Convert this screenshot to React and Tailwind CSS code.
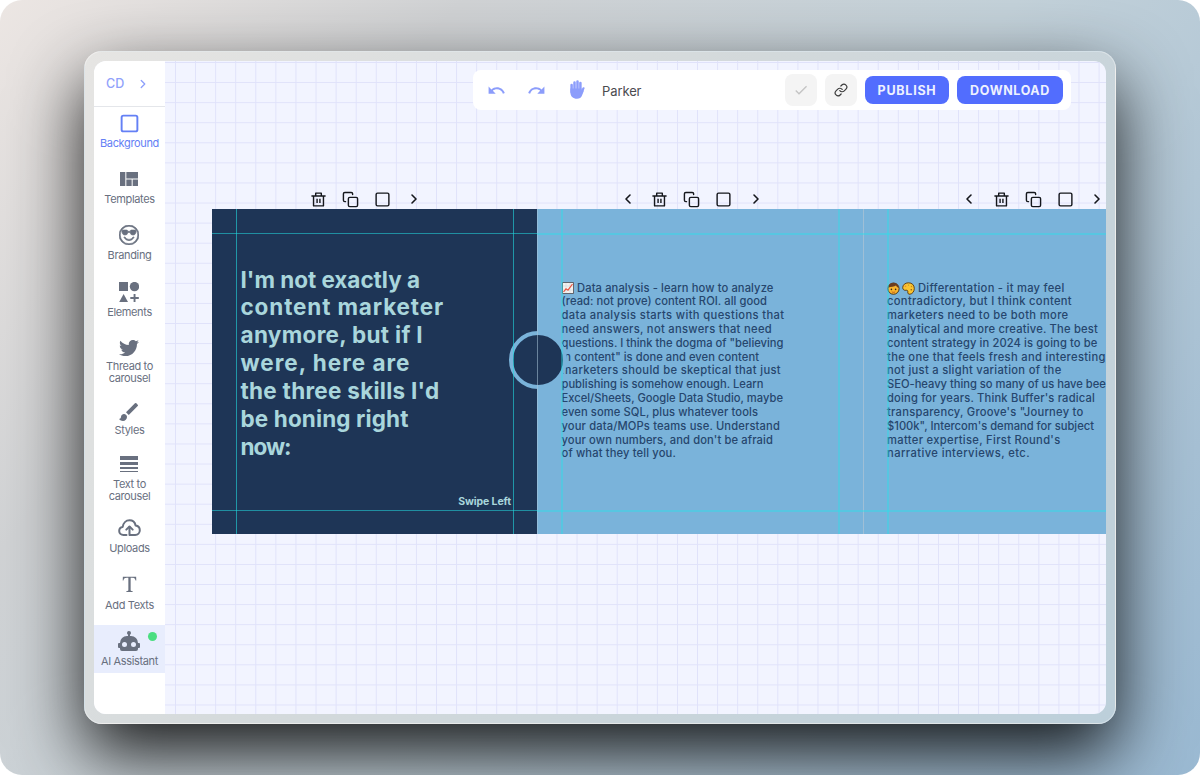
import { useLayoutEffect, useRef } from "react"
import { BsEmojiSunglasses, BsFonts } from "react-icons/bs"
import { FaTwitter } from "react-icons/fa"
import { FiChevronLeft, FiChevronRight, FiCopy, FiLink, FiSquare } from "react-icons/fi"
import { MdBrush, MdCheck, MdLineWeight, MdRedo, MdUndo, MdViewQuilt } from "react-icons/md"
import { RiDeleteBinLine } from "react-icons/ri"

const ShapesIcon = () => (
  <svg width="20" height="20" viewBox="0 0 20 20" fill="currentColor">
    <rect x="0" y="0" width="9" height="9" />
    <circle cx="15.5" cy="4.6" r="4.7" />
    <path d="M4.6 12 9 20H.2z" />
    <path d="M14.6 12h1.9v3.1h3.3v1.9h-3.3v3.1h-1.9V17h-3.3v-1.9h3.3z" />
  </svg>
)

const CloudUploadIcon = () => (
  <svg width="23" height="18" viewBox="0 0 23 18" fill="none" stroke="currentColor" strokeWidth="2" strokeLinecap="round" strokeLinejoin="round">
    <path d="M8.5 16H5.5C3 16 1.2 14.3 1.2 12c0-2 1.4-3.7 3.5-4C5.2 4 8 1.3 11.5 1.3c3 0 5.4 1.9 6.1 5.2C20 6.8 21.8 8.6 21.8 11.2c0 2.7-1.9 4.8-4.6 4.8h-5.7V8" />
    <path d="M8.3 10.6 11.5 7.5l3.2 3.1" />
  </svg>
)

const RobotIcon = () => (
  <svg width="24" height="24" viewBox="0 0 24 24" fill="currentColor">
    <path d="M12 2a2 2 0 0 1 2 2c0 .74-.4 1.39-1 1.73V7h1a7 7 0 0 1 7 7h1a1 1 0 0 1 1 1v3a1 1 0 0 1-1 1h-1v1a2 2 0 0 1-2 2H5a2 2 0 0 1-2-2v-1H2a1 1 0 0 1-1-1v-3a1 1 0 0 1 1-1h1a7 7 0 0 1 7-7h1V5.73A2 2 0 0 1 12 2M7.5 13a2.5 2.5 0 1 0 0 5 2.5 2.5 0 0 0 0-5m9 0a2.5 2.5 0 1 0 0 5 2.5 2.5 0 0 0 0-5z" />
  </svg>
)

const HandIcon = () => (
  <svg width="15" height="19" viewBox="0 0 15 19" className="mb-px ml-[24px]" fill="none" stroke="currentColor" strokeLinecap="round">
    <path d="M1.6 5v7M4.5 2.6v9M7.5 1.5v9M10.4 3v9" strokeWidth="2.5" />
    <path d="M13.5 8.3 11.2 13" strokeWidth="2.2" />
    <path d="M.4 8.5h11.2v3l1.4-2 .8 1.5-1.8 4.5c-.8 2.2-2.5 3.3-5 3.3-4 0-6.600-2.500-6.600-6.300z" fill="currentColor" stroke="none" />
  </svg>
)

const ChartEmoji = () => (
  <svg width="12" height="12" viewBox="0 0 12 12" className="mr-[3.5px]">
    <rect x=".4" y=".4" width="11.2" height="11.2" rx=".5" fill="#f4f1ee" stroke="#3f3b3f" strokeWidth=".8" />
    <path d="M4 1v10M8 1v10M1 4h10M1 8h10" stroke="#cbd6dc" strokeWidth=".5" />
    <path d="M1.5 10 4 6.8l2 1.4L10.5 2" fill="none" stroke="#e8533f" strokeWidth="1.2" />
  </svg>
)

const FaceEmoji = () => (
  <svg width="13" height="13" viewBox="0 0 13 13" className="mr-[1.5px]">
    <circle cx="6.5" cy="6.7" r="5.6" fill="#f9b52e" stroke="#3b2a1c" strokeWidth=".9" />
    <path d="M1.2 5.8C1.500 2.500 3.500.8 6.500.8s5 1.700 5.300 5C10.500 5.500 9.500 4.700 9 3.600 7.500 4.900 3.500 4.600 1.200 5.800z" fill="#6b3d1f" />
    <circle cx="4.4" cy="7.4" r=".8" fill="#3b2a1c" />
    <circle cx="8.6" cy="7.4" r=".8" fill="#3b2a1c" />
    <path d="M4.8 9.8c1 .7 2.4.7 3.4 0" fill="none" stroke="#b0451c" strokeWidth=".8" />
  </svg>
)

const PaletteEmoji = () => (
  <svg width="13" height="13" viewBox="0 0 13 13" className="mr-[3.5px]">
    <path d="M6.5.8C3 .8.7 3 .7 5.6c0 2 1.5 3 3.2 2.7 1.5-.3 2.1.5 1.9 1.7-.2 1.5.7 2.4 2.2 2.2 2.6-.3 4.3-3 4.3-5.7C12.3 3 10 .8 6.5.8z" fill="#fac42f" stroke="#57340f" strokeWidth=".9" />
    <circle cx="3.5" cy="4.2" r=".8" fill="#e8833f" />
    <circle cx="6.5" cy="3" r=".6" fill="#a98b2b" />
    <circle cx="9.5" cy="4.5" r=".7" fill="#c98a1c" />
    <circle cx="9.3" cy="7.7" r=".8" fill="#8a5a1a" />
  </svg>
)

const menu = [
  { label: "Background", icon: <FiSquare size={21} strokeWidth={2.2} />, active: true },
  { label: "Templates", icon: <MdViewQuilt size={24} /> },
  { label: "Branding", icon: <BsEmojiSunglasses size={20} strokeWidth={0.5} /> },
  { label: "Elements", icon: <ShapesIcon /> },
  { label: "Thread to carousel", icon: <FaTwitter size={20} />, tall: true },
  { label: "Styles", icon: <MdBrush size={24} className="mt-1" /> },
  { label: "Text to carousel", icon: <MdLineWeight size={24} className="-mt-1" />, tall: true },
  { label: "Uploads", icon: <CloudUploadIcon /> },
  { label: "Add Texts", icon: <BsFonts size={25} /> },
  { label: "AI Assistant", icon: <RobotIcon />, highlight: true },
]

const headline = [
  ["I'm not exactly a", 179.5],
  ["content marketer", 203.5],
  ["anymore, but if I", 182.5],
  ["were, here are", 170],
  ["the three skills I'd", 199],
  ["be honing right", 168],
  ["now:", 50],
]

const analysis = [
  ["Data analysis - learn how to analyze", 196.5],
  ["(read: not prove) content ROI. all good", 205.5],
  ["data analysis starts with questions that", 223],
  ["need answers, not answers that need", 210.5],
  ["questions. I think the dogma of \"believing", 222],
  ["in content\" is done and even content", 197.5],
  ["marketers should be skeptical that just", 219.5],
  ["publishing is somehow enough. Learn", 202],
  ["Excel/Sheets, Google Data Studio, maybe", 221.5],
  ["even some SQL, plus whatever tools", 196.5],
  ["your data/MOPs teams use. Understand", 218.5],
  ["your own numbers, and don't be afraid", 211.5],
  ["of what they tell you.", 114.5],
]

const differentiation = [
  ["Differentation - it may feel", 146.5],
  ["contradictory, but I think content", 185],
  ["marketers need to be both more", 181.5],
  ["analytical and more creative. The best", 211],
  ["content strategy in 2024 is going to be", 210.5],
  ["the one that feels fresh and interesting,", 222.5],
  ["not just a slight variation of the", 174.5],
  ["SEO-heavy thing so many of us have been", 225.5],
  ["doing for years. Think Buffer's radical", 208],
  ["transparency, Groove's \"Journey to", 196.5],
  ["$100k\", Intercom's demand for subject", 207],
  ["matter expertise, First Round's", 173.5],
  ["narrative interviews, etc.", 143],
]

// Spreads the letters of one line so that it fills the given width
function FitLine({ text, width }) {
  const ref = useRef(null)
  useLayoutEffect(() => {
    const el = ref.current
    el.style.letterSpacing = "0px"
    const natural = el.getBoundingClientRect().width
    el.style.letterSpacing = `${(width - natural) / text.length}px`
  }, [text, width])
  return <span ref={ref} className="whitespace-pre">{text}</span>
}

function TextBlock({ lines, lead, className }) {
  return (
    <div className={className}>
      {lines.map(([text, width], i) => (
        <div key={i} className="flex items-center whitespace-nowrap">
          {i === 0 && lead}
          <FitLine text={text} width={width} />
        </div>
      ))}
    </div>
  )
}

function MenuItem({ label, icon, active, highlight, tall }) {
  return (
    <div className={`relative flex w-full shrink-0 flex-col items-center ${tall ? "h-[54px]" : "h-12"} ${highlight ? "bg-[#e8edfd]" : ""} ${active ? "text-[#6480f5]" : "text-[#69707f]"}`}>
      <div className={`flex shrink-0 items-center justify-center pr-px ${tall ? "h-7 pt-1" : "h-[30px] pt-0.5"}`}>{icon}</div>
      <div className="w-[60px] text-center text-[11px] leading-3 tracking-[-0.35px]">
        <span className={tall ? "" : "flex justify-center whitespace-nowrap"}>{label}</span>
      </div>
      {highlight && <span className="absolute right-2 top-[7px] h-[9px] w-[9px] rounded-full bg-[#4ade80]" />}
    </div>
  )
}

function SlideTools({ first }) {
  return (
    <div className="flex w-[341.6px] shrink-0 items-center justify-center text-[#15171c]">
      <span className="flex w-8 justify-center">{!first && <FiChevronLeft size={16} strokeWidth={2.4} />}</span>
      <span className="flex w-8 justify-center"><RiDeleteBinLine size={17} /></span>
      <span className="flex w-8 justify-center"><FiCopy size={17} /></span>
      <span className="flex w-8 justify-center"><FiSquare size={17} /></span>
      <span className="flex w-8 justify-center"><FiChevronRight size={16} strokeWidth={2.4} /></span>
    </div>
  )
}

function Toolbar() {
  return (
    <div className="ml-[308px] mt-[9px] flex h-10 w-[598px] shrink-0 items-center rounded-lg bg-white pr-2 text-[#8c9dfb]">
      <MdUndo size={19} className="ml-[14px]" />
      <MdRedo size={19} className="ml-[21px]" />
      <HandIcon />
      <span className="ml-[17px] pt-[3px] text-[13px] tracking-[-0.1px] text-[#4b4b4f]">Parker</span>
      <div className="ml-auto flex items-center gap-2">
        <span className="flex h-8 w-8 items-center justify-center rounded-lg bg-[#f4f4f4] text-[#c4c4c4]"><MdCheck size={16} /></span>
        <span className="flex h-8 w-8 items-center justify-center rounded-lg bg-[#f4f4f4] text-[#3b3b3b]"><FiLink size={14} /></span>
        <button className="h-7 w-[84px] rounded-lg bg-[#526dfe] pt-0.5 text-[12.5px] font-bold tracking-[0.75px] text-[#eef1ff]">PUBLISH</button>
        <button className="h-7 w-[106px] rounded-lg bg-[#526dfe] pt-0.5 text-[12.5px] font-bold tracking-[0.6px] text-[#eef1ff]">DOWNLOAD</button>
      </div>
    </div>
  )
}

function Slides() {
  return (
    <div className="relative ml-[47px] mt-px flex h-[325px] w-[977px] shrink-0">
      <div className="flex w-[325px] shrink-0 flex-col bg-[#1e3556] pl-[28.5px] text-[#a9d6dc]">
        <TextBlock lines={headline} className="mt-[56.5px] text-[22.5px] font-bold leading-[27.9px]" />
        <div className="mt-[33px] pr-[26px] text-right text-[10.5px] font-bold leading-4 tracking-[-0.1px]">Swipe Left</div>
      </div>
      <div className="w-[326px] shrink-0 bg-[#7ab3da] pl-[24.5px] pt-[72.5px] text-[#26466d]">
        <TextBlock lines={analysis} lead={<ChartEmoji />} className="text-[11.2px] font-medium leading-[13.83px]" />
      </div>
      <div className="w-[326px] shrink-0 bg-[#7ab3da] pl-[24px] pt-[72.5px] text-[#26466d]">
        <TextBlock lines={differentiation} lead={<><FaceEmoji /><PaletteEmoji /></>} className="text-[11.2px] font-medium leading-[13.83px]" />
      </div>

      {/* Connector between the first two slides */}
      <div className="absolute left-[297px] top-[122px] h-[58px] w-[58px] rounded-full border-4 border-[#7ab3da] bg-[#1e3556]" />

      {/* Slide borders and safe area guides */}
      <div className="absolute left-[325px] top-0 h-full w-px bg-[#a9c4d8]/55" />
      <div className="absolute left-[651px] top-0 h-full w-px bg-[#c3ccd2]/50" />
      <div className="absolute left-0 top-[24px] h-px w-[325px] bg-[#22d9e0]/55" />
      <div className="absolute left-0 top-[301px] h-px w-[325px] bg-[#22d9e0]/55" />
      <div className="absolute left-[325px] right-0 top-[24px] h-[2px] bg-[#22e4ea]/40" />
      <div className="absolute left-[325px] right-0 top-[301px] h-[2px] bg-[#22e4ea]/40" />
      <div className="absolute left-[24px] top-0 h-full w-px bg-[#22d9e0]/60" />
      <div className="absolute left-[301px] top-0 h-full w-px bg-[#22d9e0]/60" />
      <div className="absolute left-[349px] top-0 h-full w-[2px] bg-[#22e4ea]/40" />
      <div className="absolute left-[626px] top-0 h-full w-[2px] bg-[#22e4ea]/35" />
      <div className="absolute left-[675px] top-0 h-full w-[2px] bg-[#22e4ea]/40" />
    </div>
  )
}

export default function App() {
  return (
    <div className="h-[775px] w-[1200px] overflow-hidden bg-white font-['Inter',sans-serif]">
      <div className="flex h-full w-full overflow-hidden rounded-[22px] bg-[linear-gradient(130deg,#ece6e3_0%,#d0d2d4_25%,#c3d1d9_55%,#a6c0d4_85%,#9ab9d2_100%)] pl-[84px] pt-[51px]">
        <div className="h-[673px] w-[1032px] rounded-[18px] border border-white/35 bg-[linear-gradient(125deg,#e6e5e3,#d3d9db_45%,#bccfda)] p-[9px] shadow-[0_30px_70px_0_rgba(0,0,0,0.88)]">
          <div className="flex h-full w-full overflow-hidden rounded-xl bg-[#f2f4ff]">
            <div className="flex w-[71px] shrink-0 flex-col bg-white">
              <div className="flex h-[46px] shrink-0 items-center border-b border-[#e4e6ea] pl-[12px] pt-px text-[12.5px] font-medium text-[#91a2fb]">
                CD
                <FiChevronRight size={14} strokeWidth={2.4} className="mb-px ml-[12px]" />
              </div>
              <div className="flex flex-col gap-[8.2px]">
                {menu.map((item) => <MenuItem key={item.label} {...item} />)}
              </div>
            </div>
            <div className="flex min-w-0 flex-1 flex-col overflow-hidden bg-[linear-gradient(to_right,#e0e2fa_1px,transparent_1px),linear-gradient(to_bottom,#e0e2fa_1px,transparent_1px)] bg-[length:20.09px_20.09px] bg-[position:10px_1px]">
              <Toolbar />
              <div className="ml-[14.5px] mt-[80px] flex h-[18px] shrink-0">
                <SlideTools first />
                <SlideTools />
                <SlideTools />
              </div>
              <Slides />
            </div>
          </div>
        </div>
      </div>
    </div>
  )
}
